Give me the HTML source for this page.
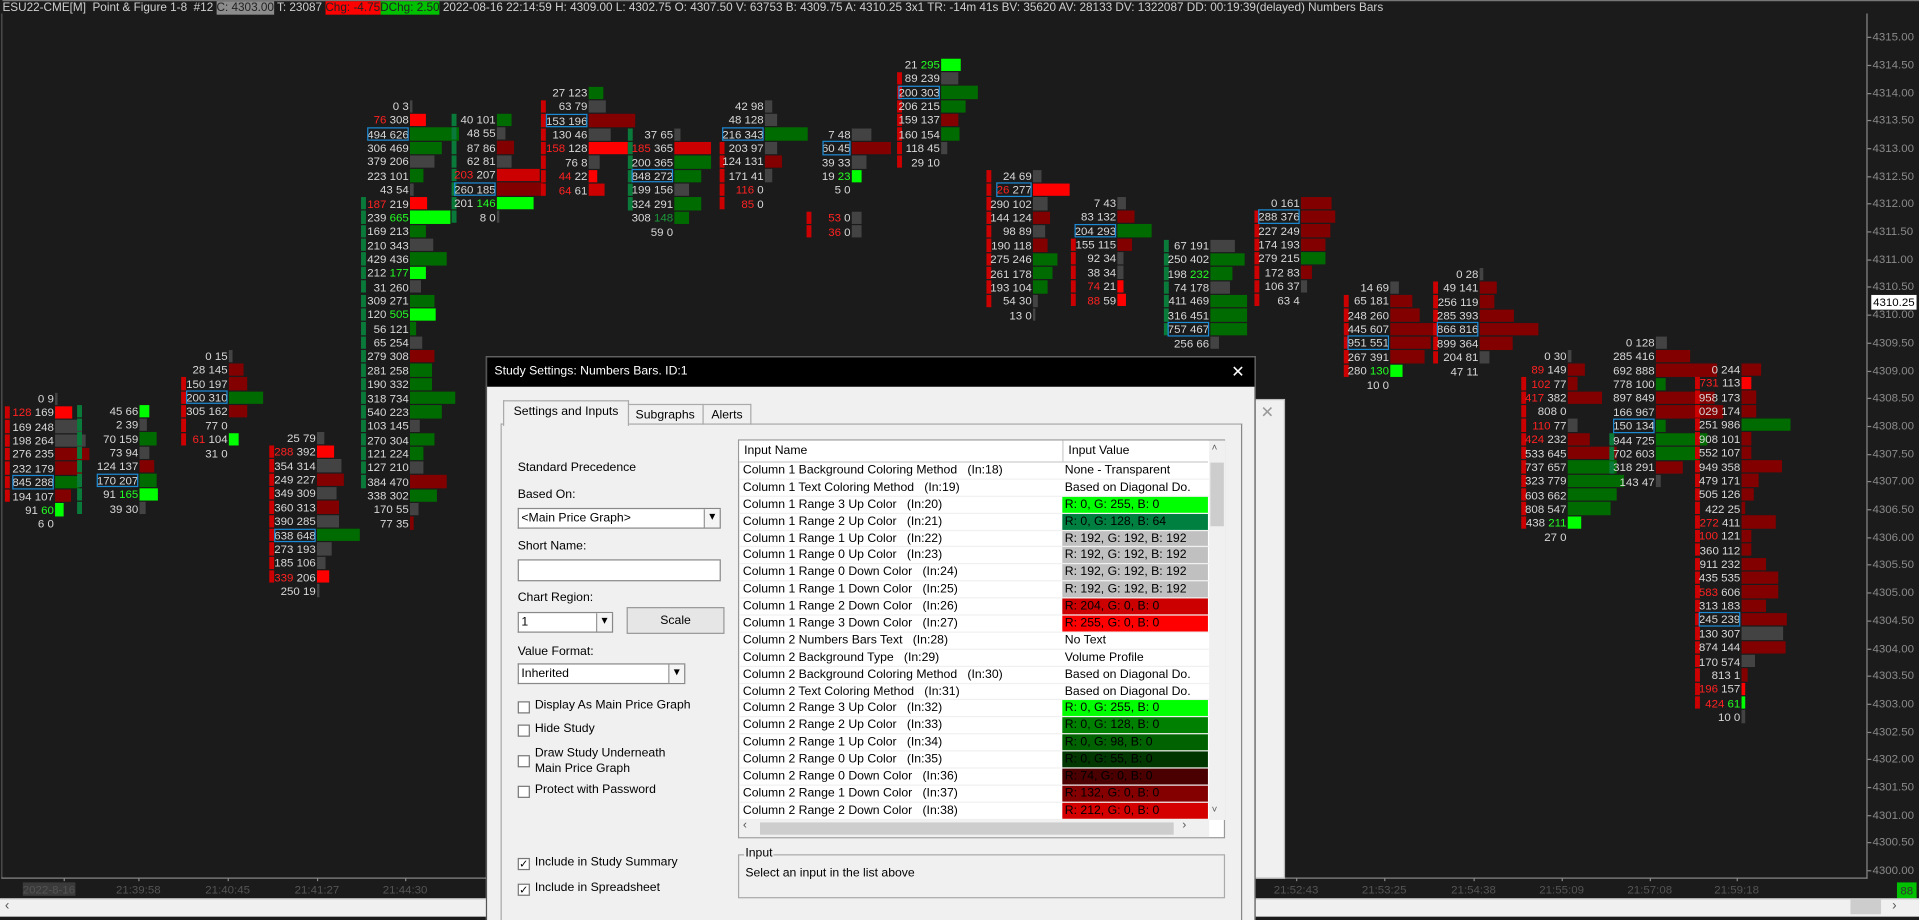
<!DOCTYPE html>
<html><head><meta charset="utf-8">
<style>
html,body{margin:0;padding:0;width:1919px;height:920px;overflow:hidden;background:#111;}
#w{position:absolute;left:0;top:0;width:1568px;height:752px;transform:scale(1.22385);transform-origin:0 0;background:#1b1b1b;font-family:"Liberation Sans",sans-serif;overflow:hidden}
.hd{position:absolute;left:2px;top:0;height:11px;right:0;font-size:9.6px;line-height:11px;color:#cfcfcf;white-space:nowrap;border-top:1px solid #777}
.hd b{font-weight:normal}
.c{position:absolute;font-size:9.4px;color:#d8d8d8}
.c p{margin:0;height:11.36px;line-height:11.36px;position:relative;width:0;white-space:nowrap}
.c p span{position:absolute;right:0;top:0}
.c p span.x{outline:1px solid #1c8ad4;outline-offset:-1px}
.c u{text-decoration:none;color:#ff2222}
.c em{font-style:normal;color:#22ff22}
.c i{position:absolute;left:1px;top:.5px;height:10.3px}
.c p.k:before,.c p.q:before{content:"";position:absolute;left:var(--t);top:.5px;width:3.6px;height:10.3px;background:#0a7a3a}
.c p.q:before{background:#cc0000}
.a{background:#00ff00}.b{background:#006b00}.d{background:#434343}.e{background:#ff0000}.f{background:#830000}.g{background:#cc0000}
.pl{position:absolute;left:1526px;font-size:9.4px;color:#8a8a8a;line-height:12px}
.pl:before{content:"";display:inline-block;width:3px;height:1px;background:#888;vertical-align:middle;margin-right:1px}
.tl{position:absolute;top:721px;font-size:9.4px;color:#545454;transform:translateX(-50%)}
.tk{position:absolute;top:717px;width:1px;height:3px;background:#888}
.dl{position:absolute;font-size:10px;color:#000;white-space:nowrap}
.cb{position:absolute;left:423px;width:8px;height:8px;border:1px solid #777;background:#fff}
.sel{position:absolute;background:#fff;border:1px solid #888;border-right:none;font-size:10px;line-height:15px;padding-left:2px;box-sizing:border-box}
.sel:after{content:"▾";position:absolute;right:0;top:0;width:12px;height:100%;border-left:1px solid #999;border-right:1px solid #888;background:#f5f5f5;text-align:center;font-size:10px;line-height:14px}
.tb{position:absolute;left:604px;top:378px;width:384px}
.tb div{height:13.9px;line-height:13.9px;font-size:10px;position:relative;white-space:nowrap;border-bottom:1px solid #f0f0f0;box-sizing:border-box}
.tb div span{position:absolute;left:264px;width:119px;top:0;bottom:0;padding-left:2px;box-sizing:border-box}
.tb div l{padding-left:3px}
</style></head><body>
<div id="w">
<div class="hd">ESU22-CME[M]&nbsp; Point &amp; Figure 1-8&nbsp; #12 <b style="background:#8c8c8c;color:#222">C: 4303.00</b> T: 23087 <b style="background:#ff0000;color:#222">Chg: -4.75</b><b style="background:#00c000;color:#222">DChg: 2.50</b> 2022-08-16 22:14:59 H: 4309.00 L: 4302.75 O: 4307.50 V: 63753 B: 4309.75 A: 4310.25 3x1 TR: -14m 41s BV: 35620 AV: 28133 DV: 1322087 DD: 00:19:39(delayed) Numbers Bars</div>
<div style="position:absolute;left:1px;top:11px;width:1px;height:706px;background:#555"></div>
<div style="position:absolute;left:1525px;top:11px;width:1px;height:707px;background:#888"></div>
<div style="position:absolute;left:1px;top:717px;width:1525px;height:1px;background:#888"></div>

<!-- price axis -->
<div class="pl" style="top:24px">4315.00</div><div class="pl" style="top:47px">4314.50</div><div class="pl" style="top:70px">4314.00</div><div class="pl" style="top:92px">4313.50</div><div class="pl" style="top:115px">4313.00</div><div class="pl" style="top:138px">4312.50</div><div class="pl" style="top:160px">4312.00</div><div class="pl" style="top:183px">4311.50</div><div class="pl" style="top:206px">4311.00</div><div class="pl" style="top:228px">4310.50</div><div class="pl" style="top:251px">4310.00</div><div class="pl" style="top:274px">4309.50</div><div class="pl" style="top:297px">4309.00</div><div class="pl" style="top:319px">4308.50</div><div class="pl" style="top:342px">4308.00</div><div class="pl" style="top:365px">4307.50</div><div class="pl" style="top:387px">4307.00</div><div class="pl" style="top:410px">4306.50</div><div class="pl" style="top:433px">4306.00</div><div class="pl" style="top:455px">4305.50</div><div class="pl" style="top:478px">4305.00</div><div class="pl" style="top:501px">4304.50</div><div class="pl" style="top:524px">4304.00</div><div class="pl" style="top:546px">4303.50</div><div class="pl" style="top:569px">4303.00</div><div class="pl" style="top:592px">4302.50</div><div class="pl" style="top:614px">4302.00</div><div class="pl" style="top:637px">4301.50</div><div class="pl" style="top:660px">4301.00</div><div class="pl" style="top:682px">4300.50</div><div class="pl" style="top:705px">4300.00</div>
<div style="position:absolute;left:1529px;top:241px;width:37px;height:12px;background:#fff;color:#000;font-size:9.4px;line-height:12px;text-align:center">4310.25</div>

<!-- time axis -->
<div class="tl" style="left:40px;background:#3a3a3a">2022-8-16</div><div class="tk" style="left:52px"></div>
<div class="tl" style="left:113px">21:39:58</div><div class="tk" style="left:113px"></div>
<div class="tl" style="left:186px">21:40:45</div><div class="tk" style="left:186px"></div>
<div class="tl" style="left:259px">21:41:27</div><div class="tk" style="left:259px"></div>
<div class="tl" style="left:331px">21:44:30</div><div class="tk" style="left:331px"></div>
<div class="tl" style="left:1059px">21:52:43</div><div class="tk" style="left:1059px"></div>
<div class="tl" style="left:1131px">21:53:25</div><div class="tk" style="left:1131px"></div>
<div class="tl" style="left:1204px">21:54:38</div><div class="tk" style="left:1204px"></div>
<div class="tl" style="left:1276px">21:55:09</div><div class="tk" style="left:1276px"></div>
<div class="tl" style="left:1348px">21:57:08</div><div class="tk" style="left:1348px"></div>
<div class="tl" style="left:1419px">21:59:18</div><div class="tk" style="left:1419px"></div>
<div style="position:absolute;left:1550px;top:721px;width:16px;height:13px;background:#00c000;color:#333;font-size:9.4px;line-height:13px;text-align:center">88</div>
<div style="position:absolute;left:0;top:734px;width:1568px;height:14px;background:#f0f0f0;border-top:1px solid #ccc"></div>
<div style="position:absolute;left:4px;top:734px;font-size:11px;color:#555">‹</div>
<div style="position:absolute;left:1512px;top:735px;width:25px;height:12px;background:#cdcdcd"></div>
<div style="position:absolute;left:1546px;top:734px;font-size:11px;color:#555">›</div>

<!-- columns -->
<div class="c" style="left:44px;top:320px;--t:-40px">
<p><span>0 9</span><i class="d" style="width:2px"></i></p>
<p class="q"><span><u>128</u> 169</span><i class="e" style="width:14px"></i></p>
<p class="q"><span>169 248</span><i class="d" style="width:22px"></i></p>
<p class="q"><span>198 264</span><i class="d" style="width:25px"></i></p>
<p class="q"><span>276 235</span><i class="f" style="width:28px"></i></p>
<p class="q"><span>232 179</span><i class="f" style="width:22px"></i></p>
<p class="q"><span class="x">845 288</span><i class="b" style="width:20px"></i></p>
<p class="q"><span>194 107</span><i class="f" style="width:13px"></i></p>
<p><span>91 <em>60</em></span><i class="a" style="width:7px"></i></p>
<p><span>6 0</span></p>
</div>
<div class="c" style="left:113px;top:330px;--t:-50px">
<p class="k"><span>45 66</span><i class="a" style="width:8px"></i></p>
<p class="k"><span>2 39</span><i class="d" style="width:6px"></i></p>
<p class="k"><span>70 159</span><i class="b" style="width:14px"></i></p>
<p class="k"><span>73 94</span><i class="d" style="width:8px"></i></p>
<p class="k"><span>124 137</span><i class="f" style="width:12px"></i></p>
<p class="k"><span class="x">170 207</span><i class="b" style="width:14px"></i></p>
<p class="k"><span>91 <em>165</em></span><i class="a" style="width:15px"></i></p>
<p class="k"><span>39 30</span><i class="d" style="width:5px"></i></p>
</div>
<div class="c" style="left:186px;top:285px;--t:-38px">
<p><span>0 15</span><i class="d" style="width:3px"></i></p>
<p><span>28 145</span><i class="f" style="width:12px"></i></p>
<p class="q"><span>150 197</span><i class="f" style="width:15px"></i></p>
<p class="q"><span class="x">200 310</span><i class="b" style="width:28px"></i></p>
<p class="q"><span>305 162</span><i class="f" style="width:15px"></i></p>
<p class="q"><span>77 0</span></p>
<p class="q"><span><u>61</u> 104</span><i class="a" style="width:8px"></i></p>
<p><span>31 0</span></p>
</div>
<div class="c" style="left:258px;top:352px;--t:-38px">
<p><span>25 79</span><i class="d" style="width:6px"></i></p>
<p class="q"><span><u>288</u> 392</span><i class="e" style="width:14px"></i></p>
<p class="q"><span>354 314</span><i class="d" style="width:20px"></i></p>
<p class="q"><span>249 227</span><i class="f" style="width:22px"></i></p>
<p class="q"><span>349 309</span><i class="d" style="width:16px"></i></p>
<p class="q"><span>360 313</span><i class="f" style="width:18px"></i></p>
<p class="q"><span>390 285</span><i class="d" style="width:18px"></i></p>
<p class="q"><span class="x">638 648</span><i class="b" style="width:35px"></i></p>
<p class="q"><span>273 193</span><i class="d" style="width:12px"></i></p>
<p class="q"><span>185 106</span><i class="d" style="width:7px"></i></p>
<p class="q"><span><u>339</u> 206</span><i class="e" style="width:10px"></i></p>
<p><span>250 19</span><i class="d" style="width:2px"></i></p>
</div>
<div class="c" style="left:334px;top:81px;--t:-39px">
<p><span>0 3</span><i class="d" style="width:2px"></i></p>
<p><span><u>76</u> 308</span><i class="e" style="width:13px"></i></p>
<p><span class="x">494 626</span><i class="b" style="width:40px"></i></p>
<p><span>306 469</span><i class="b" style="width:26px"></i></p>
<p><span>379 206</span><i class="d" style="width:20px"></i></p>
<p><span>223 101</span><i class="b" style="width:11px"></i></p>
<p><span>43 54</span><i class="d" style="width:3px"></i></p>
<p class="k"><span><u>187</u> 219</span><i class="e" style="width:14px"></i></p>
<p class="k"><span>239 <em>665</em></span><i class="a" style="width:33px"></i></p>
<p class="k"><span>169 213</span><i class="b" style="width:13px"></i></p>
<p class="k"><span>210 343</span><i class="d" style="width:19px"></i></p>
<p class="k"><span>429 436</span><i class="b" style="width:30px"></i></p>
<p class="k"><span>212 <em>177</em></span><i class="a" style="width:13px"></i></p>
<p class="k"><span>31 260</span><i class="d" style="width:9px"></i></p>
<p class="k"><span>309 271</span><i class="b" style="width:20px"></i></p>
<p class="k"><span>120 <em>505</em></span><i class="a" style="width:21px"></i></p>
<p class="k"><span>56 121</span><i class="b" style="width:5px"></i></p>
<p class="k"><span>65 254</span><i class="d" style="width:10px"></i></p>
<p class="k"><span>279 308</span><i class="f" style="width:20px"></i></p>
<p class="k"><span>281 258</span><i class="b" style="width:18px"></i></p>
<p class="k"><span>190 332</span><i class="b" style="width:18px"></i></p>
<p class="k"><span>318 734</span><i class="b" style="width:37px"></i></p>
<p class="k"><span>540 223</span><i class="b" style="width:26px"></i></p>
<p class="k"><span>103 145</span><i class="d" style="width:8px"></i></p>
<p class="k"><span>270 304</span><i class="b" style="width:20px"></i></p>
<p class="k"><span>121 224</span><i class="b" style="width:11px"></i></p>
<p class="k"><span>127 210</span><i class="d" style="width:11px"></i></p>
<p class="k"><span>384 470</span><i class="f" style="width:30px"></i></p>
<p><span>338 302</span><i class="b" style="width:22px"></i></p>
<p><span>170 55</span><i class="d" style="width:7px"></i></p>
<p><span>77 35</span><i class="f" style="width:3px"></i></p>
</div>
<div class="c" style="left:405px;top:92px;--t:-36px">
<p class="k"><span>40 101</span><i class="b" style="width:12px"></i></p>
<p class="k"><span>48 55</span><i class="d" style="width:7px"></i></p>
<p class="k"><span>87 86</span><i class="f" style="width:14px"></i></p>
<p class="k"><span>62 81</span><i class="d" style="width:12px"></i></p>
<p class="k"><span><u>203</u> 207</span><i class="g" style="width:35px"></i></p>
<p class="k"><span class="x">260 185</span><i class="f" style="width:38px"></i></p>
<p class="k"><span>201 <em>146</em></span><i class="a" style="width:30px"></i></p>
<p class="k"><span>8 0</span><i class="d" style="width:2px"></i></p>
</div>
<div class="c" style="left:480px;top:70px;--t:-38px">
<p><span>27 123</span><i class="b" style="width:12px"></i></p>
<p class="q"><span>63 79</span><i class="d" style="width:14px"></i></p>
<p class="q"><span class="x">153 196</span><i class="f" style="width:38px"></i></p>
<p class="q"><span>130 46</span><i class="d" style="width:18px"></i></p>
<p class="q"><span><u>158</u> 128</span><i class="e" style="width:32px"></i></p>
<p class="q"><span>76 8</span><i class="d" style="width:9px"></i></p>
<p class="q"><span><u>44</u> 22</span><i class="e" style="width:7px"></i></p>
<p class="q"><span><u>64</u> 61</span><i class="g" style="width:13px"></i></p>
</div>
<div class="c" style="left:550px;top:104px;--t:-37px">
<p class="k"><span>37 65</span><i class="d" style="width:5px"></i></p>
<p class="k"><span><u>185</u> 365</span><i class="g" style="width:30px"></i></p>
<p class="k"><span>200 365</span><i class="b" style="width:30px"></i></p>
<p class="k"><span class="x">848 272</span><i class="b" style="width:22px"></i></p>
<p class="k"><span>199 156</span><i class="d" style="width:12px"></i></p>
<p class="k"><span>324 291</span><i class="b" style="width:22px"></i></p>
<p><span>308 <em style="color:#1a9a3a">148</em></span><i class="b" style="width:12px"></i></p>
<p><span>59 0</span></p>
</div>
<div class="c" style="left:624px;top:81px;--t:-36px">
<p><span>42 98</span><i class="d" style="width:6px"></i></p>
<p><span>48 128</span><i class="d" style="width:10px"></i></p>
<p><span class="x">216 343</span><i class="b" style="width:35px"></i></p>
<p class="q"><span>203 97</span><i class="d" style="width:10px"></i></p>
<p class="q"><span>124 131</span><i class="f" style="width:14px"></i></p>
<p class="q"><span>171 41</span><i class="d" style="width:6px"></i></p>
<p class="q"><span><u>116</u> 0</span></p>
<p class="q"><span><u>85</u> 0</span></p>
</div>
<div class="c" style="left:695px;top:104px;--t:-36px">
<p><span>7 48</span><i class="d" style="width:16px"></i></p>
<p><span class="x">60 45</span><i class="f" style="width:32px"></i></p>
<p><span>39 33</span><i class="d" style="width:12px"></i></p>
<p><span>19 <em>23</em></span><i class="a" style="width:8px"></i></p>
<p><span>5 0</span></p>
<p></p>
<p class="q"><span><u>53</u> 0</span><i class="d" style="width:8px"></i></p>
<p class="q"><span><u>36</u> 0</span><i class="d" style="width:8px"></i></p>
</div>
<div class="c" style="left:768px;top:47px;--t:-35px">
<p><span>21 <em>295</em></span><i class="a" style="width:16px"></i></p>
<p class="q"><span>89 239</span><i class="d" style="width:14px"></i></p>
<p class="q"><span class="x">200 303</span><i class="b" style="width:30px"></i></p>
<p class="q"><span>206 215</span><i class="b" style="width:20px"></i></p>
<p class="q"><span>159 137</span><i class="f" style="width:14px"></i></p>
<p class="q"><span>160 154</span><i class="b" style="width:15px"></i></p>
<p class="q"><span>118 45</span><i class="d" style="width:5px"></i></p>
<p class="q"><span>29 10</span></p>
</div>
<div class="c" style="left:843px;top:138px;--t:-37px">
<p class="q"><span>24 69</span><i class="d" style="width:7px"></i></p>
<p class="q"><span class="x"><u>26</u> 277</span><i class="e" style="width:30px"></i></p>
<p class="q"><span>290 102</span><i class="d" style="width:12px"></i></p>
<p class="q"><span>144 124</span><i class="f" style="width:14px"></i></p>
<p class="q"><span>98 89</span><i class="d" style="width:10px"></i></p>
<p class="q"><span>190 118</span><i class="f" style="width:12px"></i></p>
<p class="q"><span>275 246</span><i class="b" style="width:20px"></i></p>
<p class="q"><span>261 178</span><i class="b" style="width:16px"></i></p>
<p class="q"><span>193 104</span><i class="b" style="width:12px"></i></p>
<p class="q"><span>54 30</span><i class="d" style="width:4px"></i></p>
<p><span>13 0</span><i class="d" style="width:2px"></i></p>
</div>
<div class="c" style="left:912px;top:160px;--t:-37px">
<p><span>7 43</span><i class="d" style="width:7px"></i></p>
<p><span>83 132</span><i class="f" style="width:14px"></i></p>
<p><span class="x">204 293</span><i class="b" style="width:28px"></i></p>
<p class="q"><span>155 115</span><i class="f" style="width:12px"></i></p>
<p class="q"><span>92 34</span><i class="d" style="width:5px"></i></p>
<p class="q"><span>38 34</span><i class="d" style="width:5px"></i></p>
<p class="q"><span><u>74</u> 21</span><i class="e" style="width:5px"></i></p>
<p class="q"><span><u>88</u> 59</span><i class="e" style="width:7px"></i></p>
</div>
<div class="c" style="left:988px;top:195px;--t:-37px">
<p class="k"><span>67 191</span><i class="d" style="width:20px"></i></p>
<p class="k"><span>250 402</span><i class="b" style="width:28px"></i></p>
<p class="k"><span>198 <em>232</em></span><i class="b" style="width:18px"></i></p>
<p class="k"><span>74 178</span><i class="d" style="width:16px"></i></p>
<p class="k"><span>411 469</span><i class="b" style="width:30px"></i></p>
<p class="k"><span>316 451</span><i class="b" style="width:30px"></i></p>
<p class="k"><span class="x">757 467</span><i class="b" style="width:30px"></i></p>
<p><span>256 66</span><i class="d" style="width:7px"></i></p>
</div>
<div class="c" style="left:1062px;top:160px;--t:-37px">
<p><span>0 161</span><i class="f" style="width:25px"></i></p>
<p class="q"><span class="x">288 376</span><i class="f" style="width:28px"></i></p>
<p class="q"><span>227 249</span><i class="f" style="width:24px"></i></p>
<p class="q"><span>174 193</span><i class="f" style="width:20px"></i></p>
<p class="q"><span>279 215</span><i class="b" style="width:20px"></i></p>
<p class="q"><span>172 83</span><i class="f" style="width:9px"></i></p>
<p class="q"><span>106 37</span><i class="d" style="width:5px"></i></p>
<p class="q"><span>63 4</span></p>
</div>
<div class="c" style="left:1135px;top:229px;--t:-37px">
<p><span>14 69</span><i class="d" style="width:7px"></i></p>
<p class="q"><span>65 181</span><i class="f" style="width:18px"></i></p>
<p class="q"><span>248 260</span><i class="f" style="width:24px"></i></p>
<p class="q"><span>445 607</span><i class="f" style="width:38px"></i></p>
<p class="q"><span class="x">951 551</span><i class="f" style="width:33px"></i></p>
<p class="q"><span>267 391</span><i class="f" style="width:28px"></i></p>
<p class="q"><span>280 <em>130</em></span><i class="a" style="width:10px"></i></p>
<p><span>10 0</span></p>
</div>
<div class="c" style="left:1208px;top:218px;--t:-37px">
<p><span>0 28</span><i class="d" style="width:3px"></i></p>
<p class="q"><span>49 141</span><i class="f" style="width:14px"></i></p>
<p class="q"><span>256 119</span><i class="f" style="width:12px"></i></p>
<p class="q"><span>285 393</span><i class="f" style="width:28px"></i></p>
<p class="q"><span class="x">866 816</span><i class="f" style="width:48px"></i></p>
<p class="q"><span>899 364</span><i class="f" style="width:27px"></i></p>
<p class="q"><span>204 81</span><i class="d" style="width:8px"></i></p>
<p><span>47 11</span></p>
</div>
<div class="c" style="left:1280px;top:285px;--t:-37px">
<p><span>0 30</span><i class="d" style="width:3px"></i></p>
<p><span><u>89</u> 149</span><i class="f" style="width:14px"></i></p>
<p class="q"><span><u>102</u> 77</span><i class="f" style="width:8px"></i></p>
<p class="q"><span><u>417</u> 382</span><i class="f" style="width:28px"></i></p>
<p class="q"><span>808 0</span></p>
<p class="q"><span><u>110</u> 77</span><i class="d" style="width:8px"></i></p>
<p class="q"><span><u>424</u> 232</span><i class="f" style="width:18px"></i></p>
<p class="q"><span>533 645</span><i class="f" style="width:40px"></i></p>
<p class="q"><span>737 657</span><i class="b" style="width:40px"></i></p>
<p class="q"><span>323 779</span><i class="b" style="width:46px"></i></p>
<p class="q"><span>603 662</span><i class="b" style="width:40px"></i></p>
<p class="q"><span>808 547</span><i class="b" style="width:35px"></i></p>
<p class="q"><span>438 <em>211</em></span><i class="a" style="width:11px"></i></p>
<p><span>27 0</span></p>
</div>
<div class="c" style="left:1352px;top:274px;--t:-37px">
<p><span>0 128</span><i class="d" style="width:9px"></i></p>
<p><span>285 416</span><i class="f" style="width:28px"></i></p>
<p><span>692 888</span><i class="f" style="width:50px"></i></p>
<p><span>778 100</span><i class="b" style="width:8px"></i></p>
<p><span>897 849</span><i class="f" style="width:48px"></i></p>
<p><span>166 967</span><i class="f" style="width:55px"></i></p>
<p><span class="x">150 134</span><i class="b" style="width:8px"></i></p>
<p class="k"><span>944 725</span><i class="b" style="width:42px"></i></p>
<p class="k"><span>702 603</span><i class="b" style="width:35px"></i></p>
<p class="k"><span>318 291</span><i class="f" style="width:22px"></i></p>
<p><span>143 47</span><i class="d" style="width:4px"></i></p>
</div>
<div class="c" style="left:1422px;top:296px;--t:-37px">
<p><span>0 244</span><i class="f" style="width:16px"></i></p>
<p class="q"><span><u>731</u> 113</span><i class="e" style="width:8px"></i></p>
<p class="q"><span>958 173</span><i class="f" style="width:12px"></i></p>
<p class="q"><span>029 174</span><i class="f" style="width:12px"></i></p>
<p class="q"><span>251 986</span><i class="b" style="width:40px"></i></p>
<p class="q"><span>908 101</span><i class="f" style="width:8px"></i></p>
<p class="q"><span>552 107</span><i class="f" style="width:8px"></i></p>
<p class="q"><span>949 358</span><i class="f" style="width:33px"></i></p>
<p class="q"><span>479 171</span><i class="f" style="width:14px"></i></p>
<p class="q"><span>505 126</span><i class="f" style="width:10px"></i></p>
<p class="q"><span>422 25</span><i class="f" style="width:3px"></i></p>
<p class="q"><span><u>272</u> 411</span><i class="f" style="width:28px"></i></p>
<p class="q"><span><u>100</u> 121</span><i class="f" style="width:8px"></i></p>
<p class="q"><span>360 112</span><i class="f" style="width:8px"></i></p>
<p class="q"><span>911 232</span><i class="f" style="width:20px"></i></p>
<p class="q"><span>435 535</span><i class="f" style="width:30px"></i></p>
<p class="q"><span><u>583</u> 606</span><i class="f" style="width:30px"></i></p>
<p class="q"><span>313 183</span><i class="f" style="width:20px"></i></p>
<p class="q"><span class="x">245 239</span><i class="f" style="width:37px"></i></p>
<p class="q"><span>130 307</span><i class="d" style="width:34px"></i></p>
<p class="q"><span>874 144</span><i class="f" style="width:36px"></i></p>
<p class="q"><span>170 574</span><i class="d" style="width:11px"></i></p>
<p class="q"><span>813 1</span><i class="f" style="width:5px"></i></p>
<p class="q"><span><u>196</u> 157</span><i class="e" style="width:3px"></i></p>
<p class="q"><span><u>424</u> <em>61</em></span><i class="a" style="width:3px"></i></p>
<p><span>10 0</span><i class="d" style="width:3px"></i></p>
</div>

<!-- background window -->
<div style="position:absolute;left:1013px;top:326px;width:35px;height:390px;background:#f0f0f0;border:1px solid #bbb"></div>
<div style="position:absolute;left:1030px;top:329px;font-size:13px;color:#999">✕</div>

<!-- dialog -->
<div style="position:absolute;left:397px;top:291px;width:627px;height:470px;background:#f0f0f0;border:1px solid #555">
 <div style="height:24px;background:#000;color:#fff;font-size:10px;line-height:24px;padding-left:6px">Study Settings: Numbers Bars. ID:1<span style="position:absolute;right:8px;top:0;font-size:13px">✕</span></div>
</div>
<!-- tabs -->
<div style="position:absolute;left:409px;top:346px;width:604px;height:410px;border:1px solid #aaa;border-right-color:#888"></div>
<div style="position:absolute;left:411px;top:327px;width:101px;height:20px;background:#f0f0f0;border:1px solid #aaa;border-bottom:none;font-size:10px;line-height:18px;text-align:center">Settings and Inputs</div>
<div style="position:absolute;left:513px;top:330px;width:61px;height:16px;border:1px solid #aaa;border-bottom:none;border-left:none;font-size:10px;line-height:17px;text-align:center">Subgraphs</div>
<div style="position:absolute;left:575px;top:330px;width:38px;height:16px;border:1px solid #aaa;border-bottom:none;border-left:none;font-size:10px;line-height:17px;text-align:center">Alerts</div>

<div class="dl" style="left:423px;top:377px">Standard Precedence</div>
<div class="dl" style="left:423px;top:399px">Based On:</div>
<div class="sel" style="left:423px;top:415px;width:166px;height:17px">&lt;Main Price Graph&gt;</div>
<div class="dl" style="left:423px;top:441px">Short Name:</div>
<div style="position:absolute;left:423px;top:457px;width:166px;height:18px;background:#fff;border:1px solid #888;box-sizing:border-box"></div>
<div class="dl" style="left:423px;top:483px">Chart Region:</div>
<div class="sel" style="left:423px;top:500px;width:78px;height:17px">1</div>
<div style="position:absolute;left:512px;top:496px;width:80px;height:22px;border:1px solid #999;background:#e6e6e6;font-size:10px;line-height:22px;text-align:center;box-sizing:border-box">Scale</div>
<div class="dl" style="left:423px;top:527px">Value Format:</div>
<div class="sel" style="left:423px;top:542px;width:137px;height:17px">Inherited</div>
<div class="cb" style="top:573px"></div><div class="dl" style="left:437px;top:571px">Display As Main Price Graph</div>
<div class="cb" style="top:592px"></div><div class="dl" style="left:437px;top:590px">Hide Study</div>
<div class="cb" style="top:617px"></div><div class="dl" style="left:437px;top:609px;line-height:13px">Draw Study Underneath<br>Main Price Graph</div>
<div class="cb" style="top:642px"></div><div class="dl" style="left:437px;top:640px">Protect with Password</div>
<div class="cb" style="top:701px;font-size:9px;line-height:8px;text-align:center">✓</div><div class="dl" style="left:437px;top:699px">Include in Study Summary</div>
<div class="cb" style="top:722px;font-size:9px;line-height:8px;text-align:center">✓</div><div class="dl" style="left:437px;top:720px">Include in Spreadsheet</div>

<!-- table -->
<div style="position:absolute;left:603px;top:359px;width:398px;height:326px;background:#fff;border:1px solid #999;box-sizing:border-box"></div>
<div style="position:absolute;left:604px;top:360px;width:383px;height:17px;background:#fff;border-bottom:1px solid #ccc;font-size:10px;line-height:17px">
<span style="position:absolute;left:4px">Input Name</span><span style="position:absolute;left:264px;top:0;height:17px;border-left:1px solid #ccc;padding-left:4px">Input Value</span></div>
<div style="position:absolute;left:988px;top:360px;width:13px;height:310px;background:#f0f0f0"></div>
<div style="position:absolute;left:989px;top:378px;width:11px;height:52px;background:#cdcdcd"></div>
<div style="position:absolute;left:990px;top:361px;font-size:8px;color:#555">˄</div>
<div style="position:absolute;left:990px;top:657px;font-size:8px;color:#555">˅</div>
<div style="position:absolute;left:604px;top:670px;width:384px;height:14px;background:#f0f0f0"></div>
<div style="position:absolute;left:621px;top:672px;width:338px;height:10px;background:#cdcdcd"></div>
<div style="position:absolute;left:607px;top:669px;font-size:10px;color:#555">‹</div>
<div style="position:absolute;left:966px;top:669px;font-size:10px;color:#555">›</div>
<div class="tb">
<div><l>Column 1 Background Coloring Method&nbsp;&nbsp; (In:18)</l><span>None - Transparent</span></div>
<div><l>Column 1 Text Coloring Method&nbsp;&nbsp; (In:19)</l><span>Based on Diagonal Do.</span></div>
<div><l>Column 1 Range 3 Up Color&nbsp;&nbsp; (In:20)</l><span style="background:#00ff00">R: 0, G: 255, B: 0</span></div>
<div><l>Column 1 Range 2 Up Color&nbsp;&nbsp; (In:21)</l><span style="background:#008040">R: 0, G: 128, B: 64</span></div>
<div><l>Column 1 Range 1 Up Color&nbsp;&nbsp; (In:22)</l><span style="background:#c0c0c0">R: 192, G: 192, B: 192</span></div>
<div><l>Column 1 Range 0 Up Color&nbsp;&nbsp; (In:23)</l><span style="background:#c0c0c0">R: 192, G: 192, B: 192</span></div>
<div><l>Column 1 Range 0 Down Color&nbsp;&nbsp; (In:24)</l><span style="background:#c0c0c0">R: 192, G: 192, B: 192</span></div>
<div><l>Column 1 Range 1 Down Color&nbsp;&nbsp; (In:25)</l><span style="background:#c0c0c0">R: 192, G: 192, B: 192</span></div>
<div><l>Column 1 Range 2 Down Color&nbsp;&nbsp; (In:26)</l><span style="background:#cc0000">R: 204, G: 0, B: 0</span></div>
<div><l>Column 1 Range 3 Down Color&nbsp;&nbsp; (In:27)</l><span style="background:#ff0000">R: 255, G: 0, B: 0</span></div>
<div><l>Column 2 Numbers Bars Text&nbsp;&nbsp; (In:28)</l><span>No Text</span></div>
<div><l>Column 2 Background Type&nbsp;&nbsp; (In:29)</l><span>Volume Profile</span></div>
<div><l>Column 2 Background Coloring Method&nbsp;&nbsp; (In:30)</l><span>Based on Diagonal Do.</span></div>
<div><l>Column 2 Text Coloring Method&nbsp;&nbsp; (In:31)</l><span>Based on Diagonal Do.</span></div>
<div><l>Column 2 Range 3 Up Color&nbsp;&nbsp; (In:32)</l><span style="background:#00ff00">R: 0, G: 255, B: 0</span></div>
<div><l>Column 2 Range 2 Up Color&nbsp;&nbsp; (In:33)</l><span style="background:#008000">R: 0, G: 128, B: 0</span></div>
<div><l>Column 2 Range 1 Up Color&nbsp;&nbsp; (In:34)</l><span style="background:#006200">R: 0, G: 98, B: 0</span></div>
<div><l>Column 2 Range 0 Up Color&nbsp;&nbsp; (In:35)</l><span style="background:#003700">R: 0, G: 55, B: 0</span></div>
<div><l>Column 2 Range 0 Down Color&nbsp;&nbsp; (In:36)</l><span style="background:#4a0000">R: 74, G: 0, B: 0</span></div>
<div><l>Column 2 Range 1 Down Color&nbsp;&nbsp; (In:37)</l><span style="background:#840000">R: 132, G: 0, B: 0</span></div>
<div><l>Column 2 Range 2 Down Color&nbsp;&nbsp; (In:38)</l><span style="background:#d40000">R: 212, G: 0, B: 0</span></div>
</div>
<!-- input group -->
<div style="position:absolute;left:603px;top:698px;width:398px;height:36px;border:1px solid #aaa;box-sizing:border-box"></div>
<div class="dl" style="left:608px;top:692px;background:#f0f0f0;padding:0 1px">Input</div>
<div class="dl" style="left:609px;top:708px">Select an input in the list above</div>
</div>
</body></html>
